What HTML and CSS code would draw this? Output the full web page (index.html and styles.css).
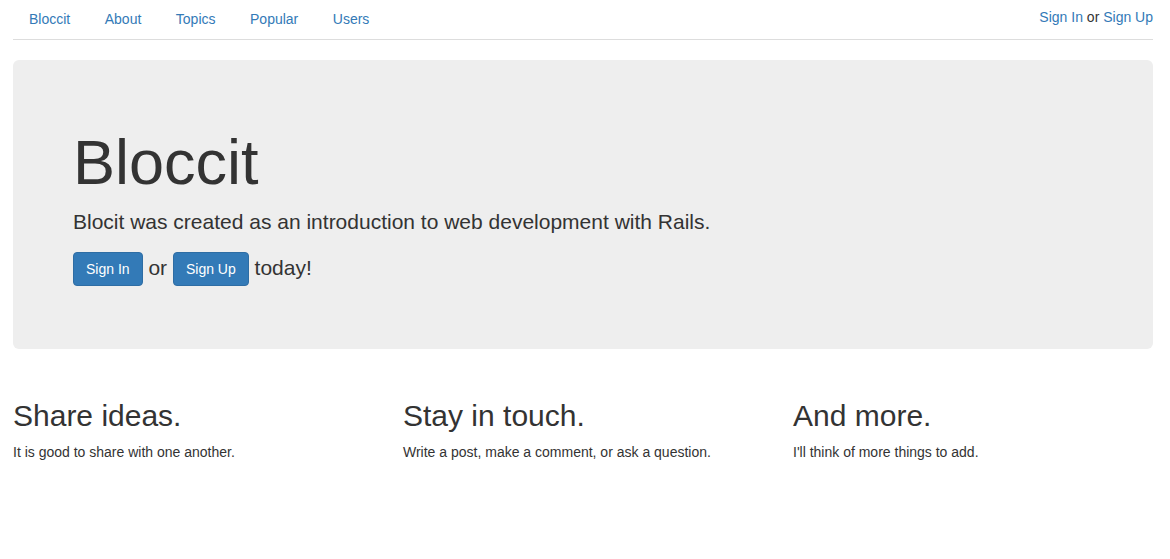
FILE: index.html
```html
<!DOCTYPE html>
<html>
<head>
<meta charset="utf-8">
<title>Bloccit</title>
<link rel="stylesheet" href="styles.css">
</head>
<body>
<div class="container">
  <div class="topbar">
    <ul class="nav">
      <li><a href="#">Bloccit</a></li>
      <li><a href="#">About</a></li>
      <li><a href="#">Topics</a></li>
      <li><a href="#">Popular</a></li>
      <li><a href="#">Users</a></li>
    </ul>
    <div class="user-info"><a href="#">Sign In</a> or <a href="#">Sign Up</a></div>
  </div>

  <div class="jumbotron">
    <h1>Bloccit</h1>
    <p>Blocit was created as an introduction to web development with Rails.</p>
    <p class="actions"><a class="btn" href="#">Sign In</a> or <a class="btn" href="#">Sign Up</a> today!</p>
  </div>

  <div class="row">
    <div class="col">
      <h2>Share ideas.</h2>
      <p>It is good to share with one another.</p>
    </div>
    <div class="col">
      <h2>Stay in touch.</h2>
      <p>Write a post, make a comment, or ask a question.</p>
    </div>
    <div class="col">
      <h2>And more.</h2>
      <p>I'll think of more things to add.</p>
    </div>
  </div>
</div>
</body>
</html>
```

FILE: styles.css
```css
* { box-sizing: border-box; }
html, body { margin: 0; padding: 0; background: #fff; }
body {
  font-family: "Liberation Sans", Arial, Helvetica, sans-serif;
  font-size: 14px;
  line-height: 20px;
  color: #333;
}
a { color: #337ab7; text-decoration: none; }

.container {
  width: 1140px;
  margin-left: 13px;
}

.topbar {
  display: flex;
  justify-content: space-between;
  align-items: flex-start;
  border-bottom: 1px solid #ddd;
  margin-bottom: 20px;
}
.nav {
  list-style: none;
  margin: 0 0 0 1px;
  padding: 0;
  display: flex;
  gap: 4.5px;
}
.nav li a {
  display: block;
  padding: 9px 15px 10px;
  line-height: 20px;
}
.user-info {
  padding-top: 7px;
  line-height: 20px;
}

.jumbotron {
  background: #eee;
  border-radius: 6px;
  padding: 48px 60px;
  margin-bottom: 30px;
}
.jumbotron h1 {
  font-size: 63px;
  line-height: 1.1;
  font-weight: 500;
  margin: 20px 0 10px;
}
.jumbotron p {
  font-size: 21px;
  line-height: 30px;
  font-weight: 200;
  margin: 0 0 15px;
}
.jumbotron p.actions { margin-bottom: 15px; }

.btn {
  display: inline-block;
  font-size: 14px;
  line-height: 20px;
  padding: 6px 12px;
  color: #fff;
  background: #337ab7;
  border: 1px solid #2e6da4;
  border-radius: 4px;
  vertical-align: middle;
}

.row {
  display: grid;
  grid-template-columns: 390px 390px 390px;
  margin-left: -15px;
}
.col { padding: 0 15px; }
.col h2 {
  font-size: 30px;
  line-height: 33px;
  font-weight: 500;
  margin: 20px 0 10px;
}
.col p { margin: 0 0 10px; }
```
